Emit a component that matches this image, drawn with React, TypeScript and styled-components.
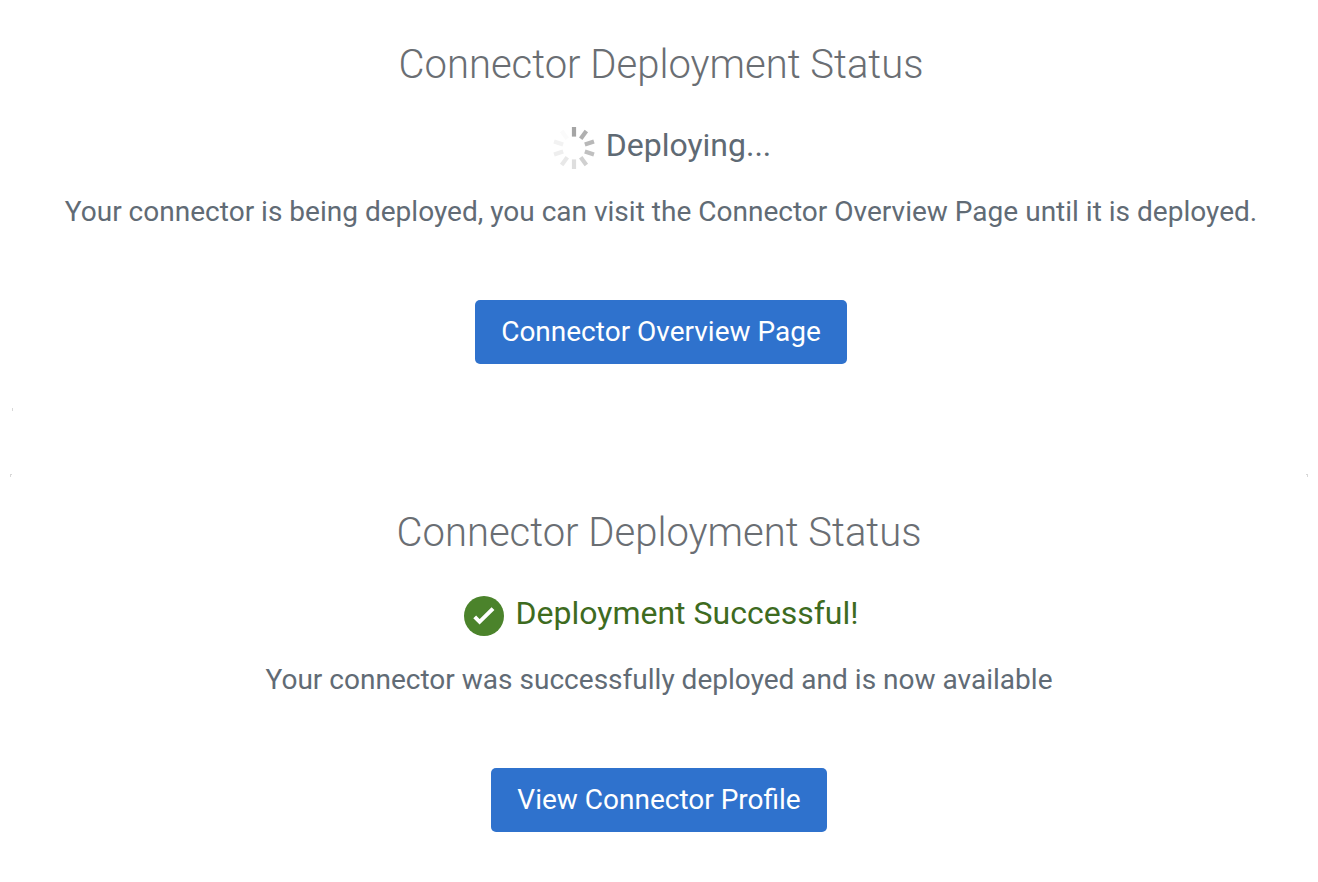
import styled, { createGlobalStyle } from "styled-components";

const GlobalStyle = createGlobalStyle`
  html, body {
    margin: 0;
    padding: 0;
    background: #fff;
  }
  body {
    font-family: Roboto, "Liberation Sans", sans-serif;
  }
`;

const Page = styled.main`
  position: relative;
  width: 1318px;
  height: 882px;
  overflow: hidden;
  display: flex;
  flex-direction: column;
`;

const Section = styled.section<{ $shift: number }>`
  flex: none;
  height: 468px;
  box-sizing: border-box;
  padding: 39px 0 0 ${(p) => p.$shift}px;
  display: flex;
  flex-direction: column;
  align-items: center;
`;

const Title = styled.h2`
  margin: 0;
  font-size: 40px;
  line-height: 52px;
  font-weight: 300;
  color: #6a6e73;
`;

const StatusRow = styled.div<{ $gap: number; $inset: number }>`
  margin-top: 33px;
  height: 48px;
  padding-left: ${(p) => p.$inset}px;
  display: flex;
  align-items: center;
  gap: ${(p) => p.$gap}px;
`;

const StatusText = styled.span<{ $success?: boolean }>`
  padding-bottom: 6px;
  font-size: 32px;
  font-weight: 400;
  color: ${(p) => (p.$success ? "#3e6b1f" : "#5f6a74")};
`;

const Message = styled.p`
  margin: 21px 0 0;
  font-size: 28.04px;
  line-height: 38px;
  font-weight: 400;
  color: #616b75;
`;

const Button = styled.button`
  margin-top: 69px;
  height: 64px;
  padding: 0 26.5px 2px;
  border: 0;
  border-radius: 5px;
  background: #2f72cd;
  color: #fff;
  font-family: inherit;
  font-size: 28px;
  font-weight: 400;
`;

// leftovers of a card corner at the edges of the screenshot
const CornerMark = styled.i<{ $x: number; $y: number; $w: number; $h: number }>`
  position: absolute;
  left: ${(p) => p.$x}px;
  top: ${(p) => p.$y}px;
  width: ${(p) => p.$w}px;
  height: ${(p) => p.$h}px;
  background: #d8d8d8;
`;

const spokes = [
  { angle: 0, color: "#a5a5a5" },
  { angle: 36, color: "#b0b0b0" },
  { angle: 72, color: "#b8b8b8" },
  { angle: 108, color: "#c0c0c0" },
  { angle: 144, color: "#d0d0d0" },
  { angle: 180, color: "#dedede" },
  { angle: 216, color: "#e8e8e8" },
  { angle: 252, color: "#eeeeee" },
  { angle: 288, color: "#f2f2f2" },
  { angle: 324, color: "#fbfbfb" },
];

const Spinner = () => (
  <svg width="42" height="42" viewBox="0 0 42 42" aria-hidden="true">
    {spokes.map((s) => (
      <rect
        key={s.angle}
        x="18.9"
        y="0"
        width="4.2"
        height="9.6"
        fill={s.color}
        transform={`rotate(${s.angle} 21 21)`}
      />
    ))}
  </svg>
);

const SuccessIcon = () => (
  <svg width="40" height="40" viewBox="0 0 40 40" aria-hidden="true">
    <circle cx="20" cy="20" r="20" fill="#4b832b" />
    <path d="M10.7 20.9l4.9 4.9 13.4-13.2" fill="none" stroke="#fff" strokeWidth="4" />
  </svg>
);

export default function App() {
  return (
    <Page>
      <GlobalStyle />
      <Section $shift={4}>
        <Title>Connector Deployment Status</Title>
        <StatusRow $gap={11} $inset={2}>
          <Spinner />
          <StatusText>Deploying...</StatusText>
        </StatusRow>
        <Message>
          Your connector is being deployed, you can visit the Connector Overview Page until it is deployed.
        </Message>
        <Button>Connector Overview Page</Button>
      </Section>
      <Section $shift={0}>
        <Title>Connector Deployment Status</Title>
        <StatusRow $gap={12} $inset={4}>
          <SuccessIcon />
          <StatusText $success>Deployment Successful!</StatusText>
        </StatusRow>
        <Message>Your connector was successfully deployed and is now available</Message>
        <Button>View Connector Profile</Button>
      </Section>
      <CornerMark $x={12} $y={408} $w={1} $h={3} />
      <CornerMark $x={10} $y={474} $w={2} $h={1} />
      <CornerMark $x={10} $y={474} $w={1} $h={3} />
      <CornerMark $x={1306} $y={474} $w={2} $h={1} />
      <CornerMark $x={1307} $y={474} $w={1} $h={3} />
    </Page>
  );
}
